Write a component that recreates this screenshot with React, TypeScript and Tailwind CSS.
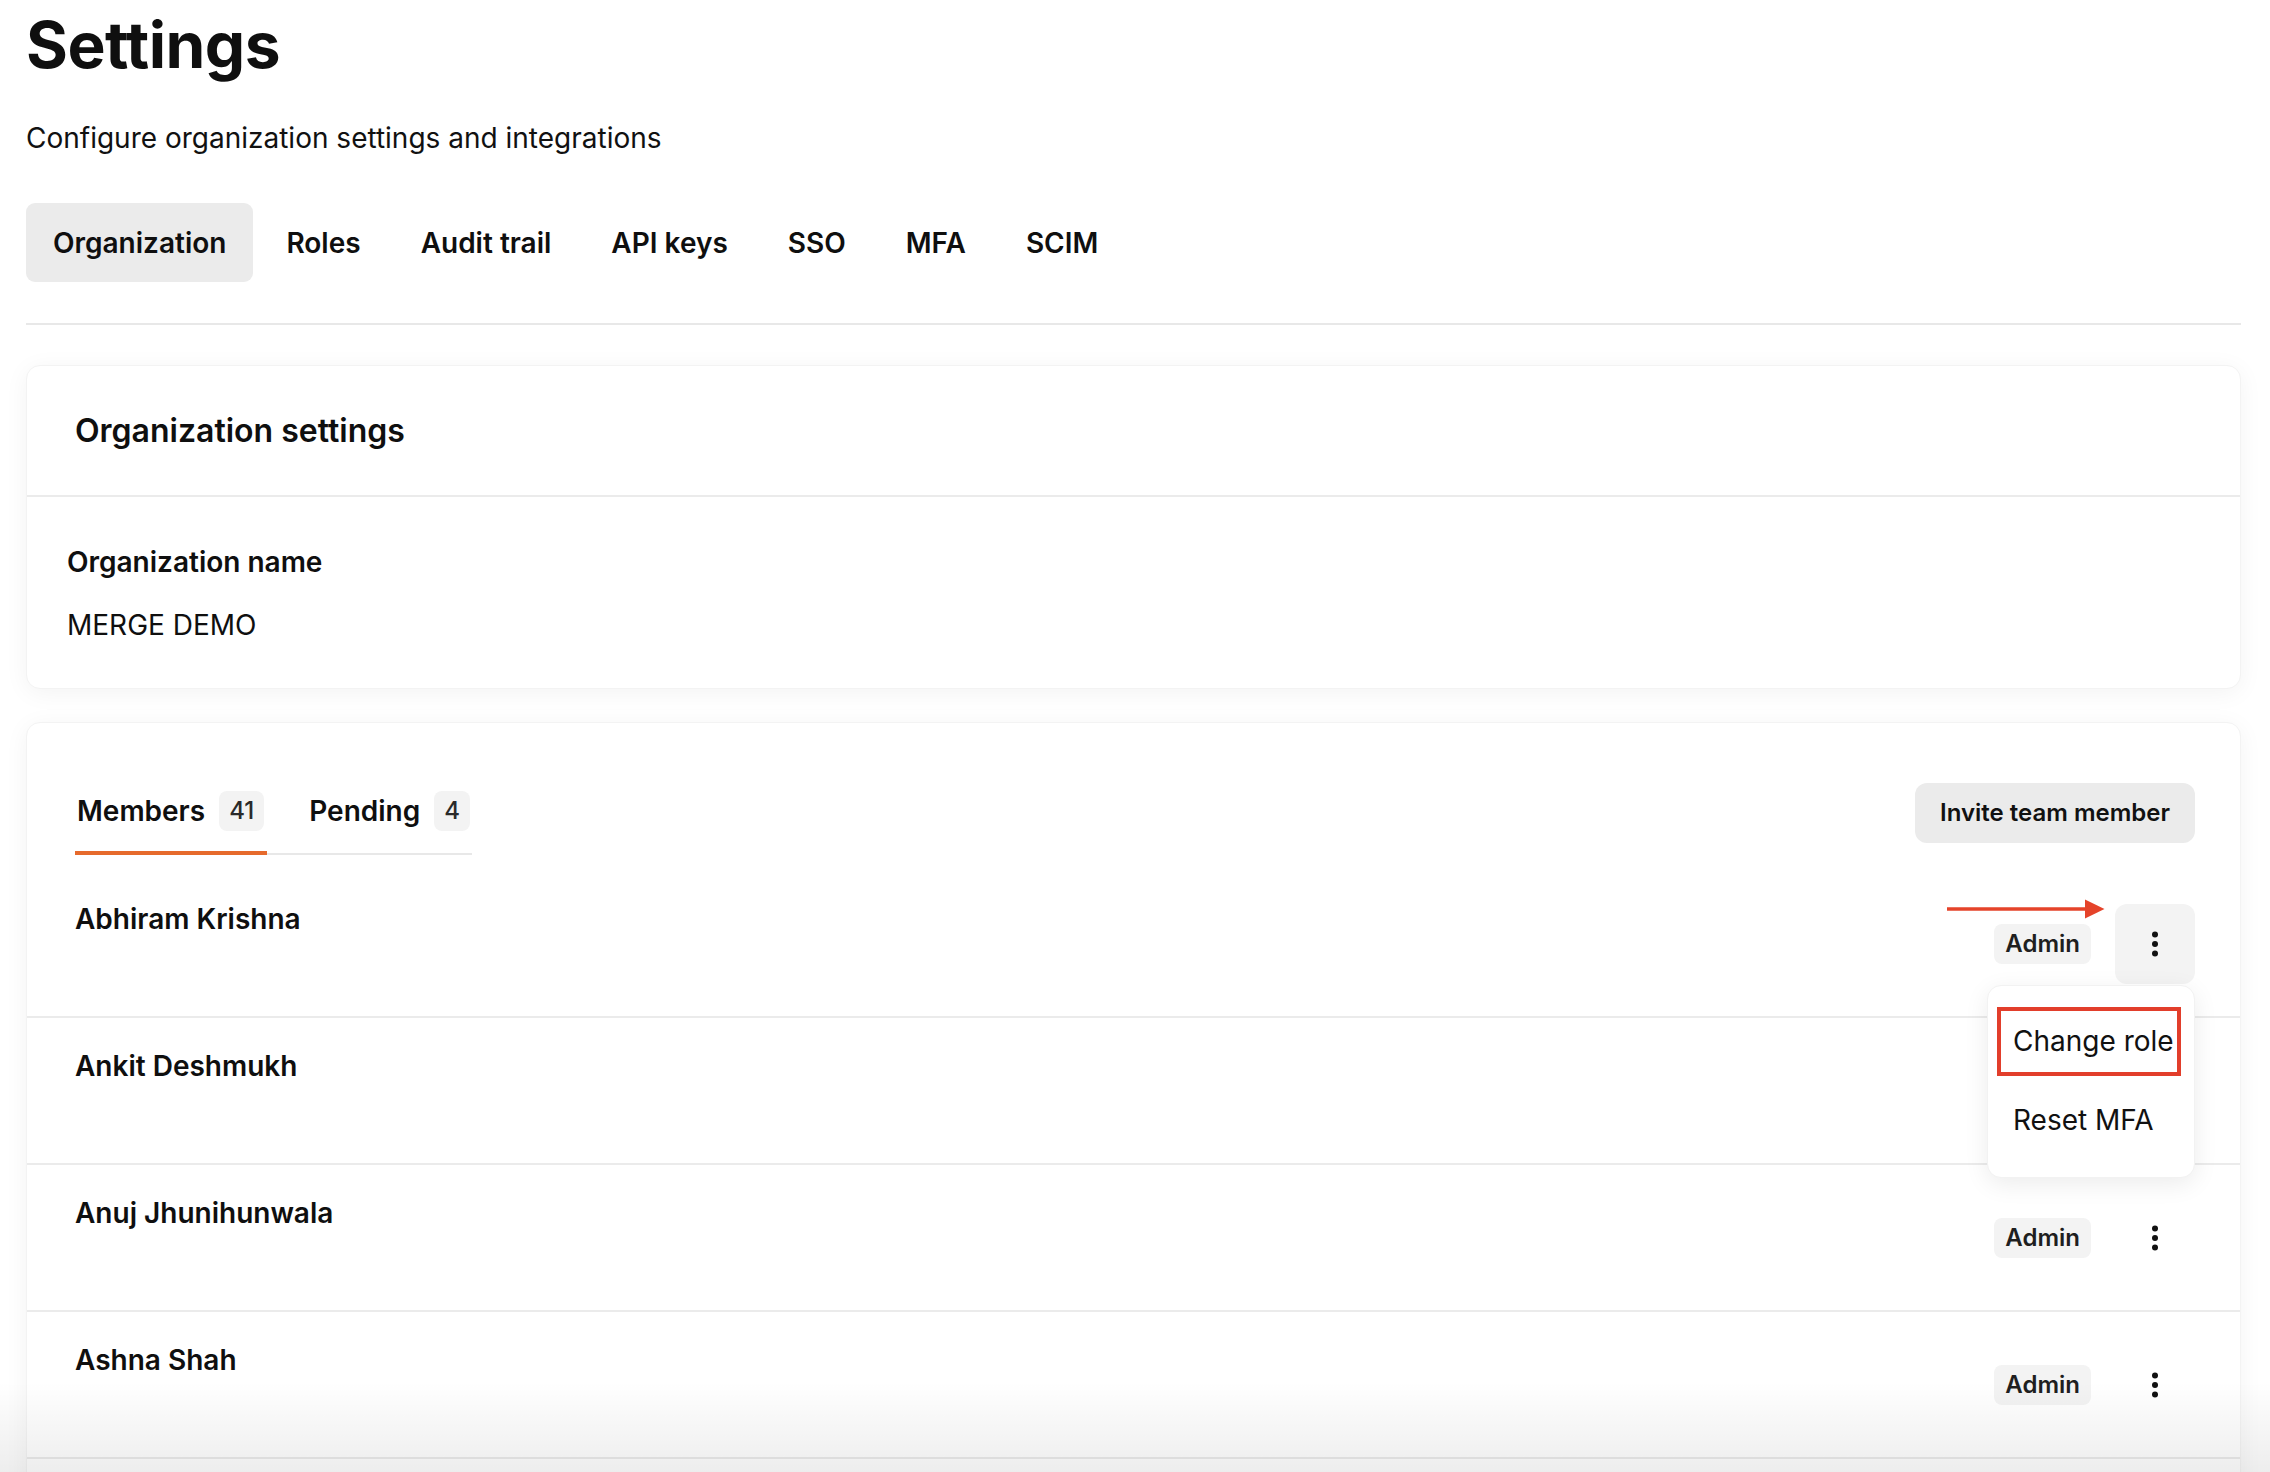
import { useState } from 'react';

const tabs = ['Organization', 'Roles', 'Audit trail', 'API keys', 'SSO', 'MFA', 'SCIM'];

const members = [
  { name: 'Abhiram Krishna', role: 'Admin' },
  { name: 'Ankit Deshmukh', role: 'Admin' },
  { name: 'Anuj Jhunihunwala', role: 'Admin' },
  { name: 'Ashna Shah', role: 'Admin' },
];

function KebabIcon() {
  return (
    <svg width="8" height="26" viewBox="0 0 8 26" fill="#111">
      <circle cx="4" cy="3.5" r="3" />
      <circle cx="4" cy="13" r="3" />
      <circle cx="4" cy="22.5" r="3" />
    </svg>
  );
}

// Red annotation arrow pointing at the open menu button
function PointerArrow() {
  return (
    <svg
      className="absolute left-[-168px] top-[-5px] pointer-events-none"
      width="158"
      height="20"
      viewBox="0 0 158 20"
    >
      <line x1="0" y1="10" x2="142" y2="10" stroke="#e5432a" strokeWidth="3.5" />
      <polygon points="138,0.5 157.5,10 138,19.5" fill="#e5432a" />
    </svg>
  );
}

function MemberRow({ name, role, open }: { name: string; role: string; open: boolean }) {
  return (
    <div className={`flex justify-between items-center h-[147px] pl-[48px] pr-[45px] border-b-2 border-[#ebebeb] ${open ? 'relative z-10' : ''}`}>
      <div className="self-start pt-[28px]">
        <p className="text-[28px] leading-[40px] font-semibold text-[#0f0f0f]">{name}</p>
      </div>
      <div className="flex items-center gap-[24px]">
        <span className="h-[40px] px-[11px] flex items-center rounded-[8px] bg-[#f3f3f3] text-[24px] font-semibold text-[#1f1f1f]">
          {role}
        </span>
        <div className="relative">
          {open && <PointerArrow />}
          <button
            type="button"
            className={`w-[80px] h-[80px] flex items-center justify-center rounded-[12px] ${open ? 'bg-[#f3f3f3]' : ''}`}
          >
            <KebabIcon />
          </button>

          {/* Dropdown */}
          {open && (
            <div className="absolute right-0 top-[81px] w-[208px] bg-white rounded-[14px] shadow-[0_6px_24px_rgba(0,0,0,0.08)] border border-[#f2f2f2] px-[9px] pt-[21px] pb-[22px] flex flex-col gap-[10px]">
              <div className="w-[184px] h-[69px] flex items-center px-[12px] border-[4px] border-[#e23e2b] text-[28px] whitespace-nowrap text-[#111]">
                Change role
              </div>
              <div className="h-[69px] flex items-center px-[16px] text-[28px] whitespace-nowrap text-[#111]">Reset MFA</div>
            </div>
          )}
        </div>
      </div>
    </div>
  );
}

export default function App() {
  const [activeTab, setActiveTab] = useState('Organization');
  const [memberTab, setMemberTab] = useState<'members' | 'pending'>('members');

  return (
    <div className="relative h-screen overflow-hidden bg-white pl-[26px] pr-[29px] pt-[6px] font-['Inter',sans-serif] text-[#0f0f0f]">
      <h1 className="text-[64px] leading-[78px] font-bold tracking-[-0.5px]">Settings</h1>
      <p className="mt-[36px] text-[28px] leading-[36px] text-[#111]">Configure organization settings and integrations</p>

      {/* Top tabs */}
      <div className="mt-[47px] flex gap-[6px]">
        {tabs.map((t) => (
          <button
            key={t}
            type="button"
            onClick={() => setActiveTab(t)}
            className={`h-[79px] px-[27px] rounded-[9px] text-[28px] font-semibold text-[#0f0f0f] ${activeTab === t ? 'bg-[#ebebeb]' : ''}`}
          >
            {t}
          </button>
        ))}
      </div>
      <div className="mt-[41px] h-[2px] bg-[#e8e8e8]" />

      {/* Organization settings card */}
      <div className="mt-[40px] bg-white rounded-[14px] border border-[#f3f3f3] shadow-[0_4px_24px_rgba(0,0,0,0.05)]">
        <div className="h-[131px] flex items-center px-[48px] border-b-2 border-[#ebebeb]">
          <h2 className="text-[32px] font-semibold">Organization settings</h2>
        </div>
        <div className="px-[40px] pt-[47px] pb-[45px]">
          <p className="text-[28px] leading-[36px] font-semibold">Organization name</p>
          <p className="mt-[27px] text-[28px] leading-[36px]">MERGE DEMO</p>
        </div>
      </div>

      {/* Members card */}
      <div className="mt-[33px] bg-white rounded-[14px] border border-[#f3f3f3] shadow-[0_4px_24px_rgba(0,0,0,0.05)] pb-[400px]">
        <div className="flex justify-between items-start pt-[60px] pl-[48px] pr-[45px]">
          <div className="mt-[8px] flex gap-[42px] border-b-2 border-[#e8e8e8]">
            <button
              type="button"
              onClick={() => setMemberTab('members')}
              className={`flex items-center gap-[14px] pl-[2px] pr-[3px] pb-[20px] -mb-[2px] border-b-4 ${memberTab === 'members' ? 'border-[#e66a2c]' : 'border-transparent'}`}
            >
              <span className="text-[28px] leading-[40px] font-semibold">Members</span>
              <span className="h-[40px] px-[10px] flex items-center rounded-[8px] bg-[#f3f3f3] text-[24px] font-medium text-[#2a2a2a]">41</span>
            </button>
            <button
              type="button"
              onClick={() => setMemberTab('pending')}
              className={`flex items-center gap-[14px] pr-[2px] pb-[20px] -mb-[2px] border-b-4 ${memberTab === 'pending' ? 'border-[#e66a2c]' : 'border-transparent'}`}
            >
              <span className="text-[28px] leading-[40px] font-semibold">Pending</span>
              <span className="h-[40px] px-[10px] flex items-center rounded-[8px] bg-[#f3f3f3] text-[24px] font-medium text-[#2a2a2a]">4</span>
            </button>
          </div>
          <button type="button" className="h-[60px] px-[25px] rounded-[12px] bg-[#ebebeb] text-[24px] font-semibold text-[#111]">
            Invite team member
          </button>
        </div>

        <div className="mt-[16px]">
          {members.map((m, i) => (
            <MemberRow key={m.name} name={m.name} role={m.role} open={i === 0} />
          ))}
        </div>
      </div>

      {/* bottom fade */}
      <div className="pointer-events-none absolute bottom-0 left-0 right-0 h-[90px] bg-gradient-to-b from-transparent to-[rgba(0,0,0,0.07)]" />
    </div>
  );
}
